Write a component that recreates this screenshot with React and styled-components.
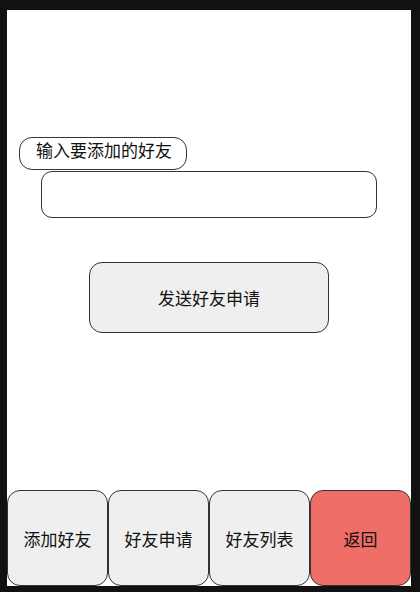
import React from 'react';
import styled, { createGlobalStyle } from 'styled-components';

const GlobalStyle = createGlobalStyle`
  html, body {
    margin: 0;
    padding: 0;
    background: #111111;
  }
  body {
    font-family: "Noto Sans CJK SC", "Noto Sans", sans-serif;
  }
`

const Screen = styled.div`
  margin: 10px 9px 6px 7px;
  height: 576px;
  background: #ffffff;
  display: flex;
  flex-direction: column;
`
const Form = styled.div`
  flex: 1;
  display: flex;
  flex-direction: column;
  align-items: flex-start;
  padding-top: 127px;
`
const Label = styled.div`
  box-sizing: border-box;
  margin-left: 12px;
  width: 168px;
  height: 33px;
  border: 1px solid #333;
  border-radius: 13px;
  padding: 0 0 0 16px;
  font-size: 17px;
  line-height: 24px;
  color: #111;
`
const Input = styled.input`
  box-sizing: border-box;
  margin: 1px 0 0 34px;
  width: 336px;
  height: 47px;
  border: 1px solid #333;
  border-radius: 11px;
  background: #fff;
  outline: none;
  font-size: 16px;
  padding: 0 12px;
`
const SendButton = styled.button`
  box-sizing: border-box;
  margin: 44px 0 0 82px;
  width: 240px;
  height: 71px;
  border: 1px solid #333;
  border-radius: 13px;
  background: #efefef;
  font-family: inherit;
  font-size: 17px;
  color: #111;
`
const TabBar = styled.div`
  display: grid;
  grid-template-columns: repeat(4, 1fr);
  height: 96px;
`
const Tab = styled.button`
  box-sizing: border-box;
  height: 96px;
  border: 1px solid #333;
  border-radius: 13px;
  background: ${(props) => (props.danger ? '#ef6e67' : '#efefef')};
  font-family: inherit;
  font-size: 17px;
  color: #111;
  padding: 0;
`

const App = () => {
  return (
    <>
      <GlobalStyle />
      <Screen>
        <Form>
          <Label>输入要添加的好友</Label>
          <Input />
          <SendButton>发送好友申请</SendButton>
        </Form>
        <TabBar>
          <Tab>添加好友</Tab>
          <Tab>好友申请</Tab>
          <Tab>好友列表</Tab>
          <Tab danger>返回</Tab>
        </TabBar>
      </Screen>
    </>
  );
};

export default App;
